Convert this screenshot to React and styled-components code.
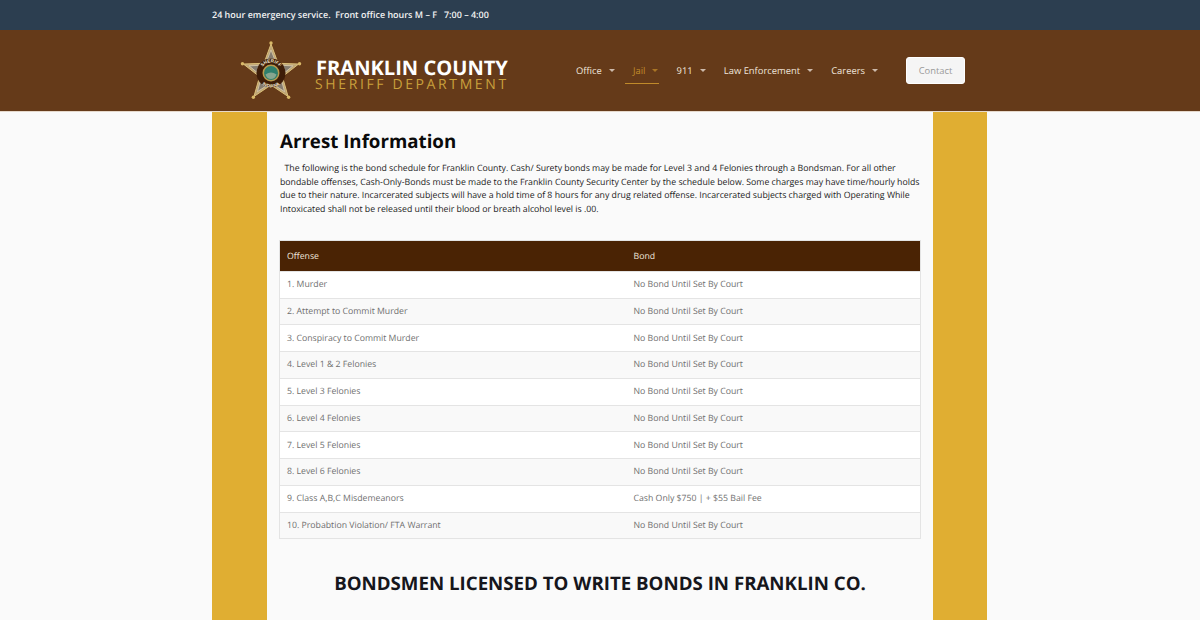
import React from "react";
import styled, { createGlobalStyle } from "styled-components";

const GlobalStyle = createGlobalStyle`
  html, body {
    margin: 0;
    padding: 0;
    height: 620px;
    overflow: hidden;
    background: #fafafa;
    font-family: "Open Sans", "Liberation Sans", sans-serif;
    text-rendering: geometricPrecision;
  }
`;

const offenses = [
  ["1. Murder", "No Bond Until Set By Court"],
  ["2. Attempt to Commit Murder", "No Bond Until Set By Court"],
  ["3. Conspiracy to Commit Murder", "No Bond Until Set By Court"],
  ["4. Level 1 & 2 Felonies", "No Bond Until Set By Court"],
  ["5. Level 3 Felonies", "No Bond Until Set By Court"],
  ["6. Level 4 Felonies", "No Bond Until Set By Court"],
  ["7. Level 5 Felonies", "No Bond Until Set By Court"],
  ["8. Level 6 Felonies", "No Bond Until Set By Court"],
  ["9. Class A,B,C Misdemeanors", "Cash Only $750 | + $55 Bail Fee"],
  ["10. Probabtion Violation/ FTA Warrant", "No Bond Until Set By Court"],
];

const navItems = ["Office", "Jail", "911", "Law Enforcement", "Careers"];

const App = () => {
  return (
    <>
      <GlobalStyle />
      <TopBar>
        <TopText>24 hour emergency service.&nbsp; Front office hours M – F &nbsp; 7:00 – 4:00</TopText>
      </TopBar>
      <Header>
        <HeaderInner>
          <Logo>
            <Badge />
            <LogoText>
              <LogoTitle>FRANKLIN COUNTY</LogoTitle>
              <LogoSub>SHERIFF DEPARTMENT</LogoSub>
            </LogoText>
          </Logo>
          <Nav>
            {navItems.map((item) => (
              <NavItem key={item} $active={item === "Jail"}>
                {item}
                <Caret />
              </NavItem>
            ))}
          </Nav>
          <ContactButton>Contact</ContactButton>
        </HeaderInner>
      </Header>
      <Page>
        <Content>
          <Title>Arrest Information</Title>
          <Intro>
            &nbsp; The following is the bond schedule for Franklin County. Cash/ Surety bonds may be made for Level 3
            and 4 Felonies through a Bondsman. For all other bondable offenses, Cash-Only-Bonds must be made to the
            Franklin County Security Center by the schedule below. Some charges may have time/hourly holds due to their
            nature. Incarcerated subjects will have a hold time of 8 hours for any drug related offense. Incarcerated
            subjects charged with Operating While Intoxicated shall not be released until their blood or breath alcohol
            level is .00.
          </Intro>
          <Table>
            <colgroup>
              <col width="347" />
              <col />
            </colgroup>
            <thead>
              <tr>
                <HeadCell>Offense</HeadCell>
                <HeadCell>Bond</HeadCell>
              </tr>
            </thead>
            <tbody>
              {offenses.map(([offense, bond]) => (
                <Row key={offense}>
                  <Cell>{offense}</Cell>
                  <Cell>{bond}</Cell>
                </Row>
              ))}
            </tbody>
          </Table>
          <Subtitle>BONDSMEN LICENSED TO WRITE BONDS IN FRANKLIN CO.</Subtitle>
        </Content>
      </Page>
    </>
  );
};

const Badge = () => {
  const center = 35;
  const tips = [0, 72, 144, 216, 288].map((a) => {
    const r = ((a - 90) * Math.PI) / 180;
    return [center + 30 * Math.cos(r), center + 30 * Math.sin(r)];
  });
  const points = [];
  for (let i = 0; i < 10; i++) {
    const r = ((i * 36 - 90) * Math.PI) / 180;
    const len = i % 2 ? 12 : 29;
    points.push(`${center + len * Math.cos(r)},${center + len * Math.sin(r)}`);
  }
  return (
    <svg width="70" height="70" viewBox="0 0 70 70">
      <polygon points={points.join(" ")} fill="#bda577" stroke="#dcc07a" strokeWidth="1" />
      {[0, 72, 144, 216, 288].map((a) => (
        <polygon
          key={a}
          points="35,12 31.5,21 38.5,21"
          fill="#857c70"
          stroke="#e0d2b4"
          strokeWidth="0.7"
          transform={`rotate(${a} 35 35)`}
        />
      ))}
      {tips.map(([x, y], i) => (
        <circle key={i} cx={x} cy={y} r="1.7" fill="#d8b868" />
      ))}
      <circle cx="35" cy="35" r="14.5" fill="#3e1d08" />
      <circle cx="35" cy="35" r="8.5" fill="#b99a4e" />
      <circle cx="35" cy="35" r="7" fill="#2f7f6c" />
      <path d="M29.500 36.500 q5.500 -4 11 0 q-1.500 4.500 -5.500 4.500 t-5.500 -4.500z" fill="#86a690" />
      <defs>
        <path id="badgeTop" d="M24.500 35 a10.500 10.500 0 0 1 21 0" />
        <path id="badgeBottom" d="M20.500 35 a14.500 14.500 0 0 0 29 0" />
      </defs>
      <BadgeLabel>
        <textPath href="#badgeTop" startOffset="50%" textAnchor="middle">SHERIFF</textPath>
      </BadgeLabel>
      <BadgeLabel>
        <textPath href="#badgeBottom" startOffset="50%" textAnchor="middle">INDIANA</textPath>
      </BadgeLabel>
    </svg>
  );
};

export default App;

const TopBar = styled.div`
  height: 30px;
  background: #2c3e50;
  display: flex;
  justify-content: center;
  padding-right: 1px;
`;

const TopText = styled.div`
  width: 775px;
  font-size: 8.97px;
  line-height: 30px;
  font-weight: 600;
  color: #f2f2f2;
  white-space: nowrap;
`;

const Header = styled.header`
  height: 82px;
  background: #653a19;
  border-bottom: 1px solid #e6d9cc;
  box-sizing: border-box;
  display: flex;
  justify-content: center;
  padding-right: 1px;
`;

const HeaderInner = styled.div`
  width: 775px;
  display: flex;
  align-items: center;
`;

const Logo = styled.div`
  display: flex;
  align-items: center;
  gap: 10px;
  margin-left: 24px;
  padding-top: 4px;
  width: 332px;
  flex: none;
`;

const LogoText = styled.div`
  display: flex;
  flex-direction: column;
  padding-top: 4px;
`;

const LogoTitle = styled.div`
  font-size: 20.1px;
  line-height: 21px;
  font-weight: 700;
  color: #fff;
  white-space: nowrap;
`;

const LogoSub = styled.div`
  font-size: 14px;
  line-height: 14px;
  letter-spacing: 2.62px;
  margin-left: -1px;
  color: #c9a03c;
  white-space: nowrap;
`;

const BadgeLabel = styled.text`
  font-family: "Liberation Sans", sans-serif;
  font-size: 4.6px;
  font-weight: 700;
  fill: #f4ead2;
`;

const Nav = styled.nav`
  display: flex;
  align-items: center;
  gap: 9.2px;
`;

const NavItem = styled.a`
  display: flex;
  align-items: center;
  box-sizing: border-box;
  height: 26px;
  padding: 0 1px 0 8px;
  font-size: 9.4px;
  color: ${(p) => (p.$active ? "#c08a2a" : "#f0e6dc")};
  border-bottom: 1px solid ${(p) => (p.$active ? "#c08a2a" : "transparent")};
  white-space: nowrap;
`;

const Caret = styled.span`
  width: 0;
  height: 0;
  margin-left: 7px;
  border-left: 3px solid transparent;
  border-right: 3px solid transparent;
  border-top: 3px solid currentColor;
  opacity: 0.75;
`;

const ContactButton = styled.button`
  width: 59px;
  height: 27px;
  margin-left: 27px;
  padding: 0;
  border: 1px solid #fff;
  border-radius: 3px;
  background: #f5f5f5;
  color: #9a9a9a;
  font-family: inherit;
  font-size: 9.4px;
`;

const Page = styled.main`
  display: flex;
  justify-content: center;
  padding-right: 1px;
`;

const Content = styled.div`
  width: 640px;
  padding: 0 13px;
  background: #fafafa;
  border-left: 55px solid #e0ae32;
  border-right: 54px solid #e0ae32;
  height: 509px;
  overflow: hidden;
`;

const Title = styled.h1`
  margin: 16px 0 0;
  font-size: 18.7px;
  line-height: 27px;
  font-weight: 700;
  color: #0a0a0a;
`;

const Intro = styled.p`
  margin: 7px 0 0;
  font-size: 8.75px;
  line-height: 13.7px;
  color: #222;
`;

const Table = styled.table`
  width: 642px;
  margin: 23px 0 0 -1px;
  border-collapse: collapse;
  table-layout: fixed;
  font-size: 8.72px;
  border: 1px solid #e4e4e4;
`;

const HeadCell = styled.th`
  height: 30px;
  padding: 0 7px;
  background: #4a2304;
  color: #f0e6dc;
  font-weight: 400;
  text-align: left;
`;

const Row = styled.tr`
  height: 26.75px;
  background: #fff;
  border-top: 1px solid #e4e4e4;
  &:nth-child(even) {
    background: #f9f9f9;
  }
`;

const Cell = styled.td`
  padding: 0 7px 1px;
  color: #6f6f6f;
`;

const Subtitle = styled.h2`
  margin: 31px 0 0;
  font-size: 18.7px;
  line-height: 27px;
  font-weight: 700;
  color: #16161c;
  text-align: center;
`;
